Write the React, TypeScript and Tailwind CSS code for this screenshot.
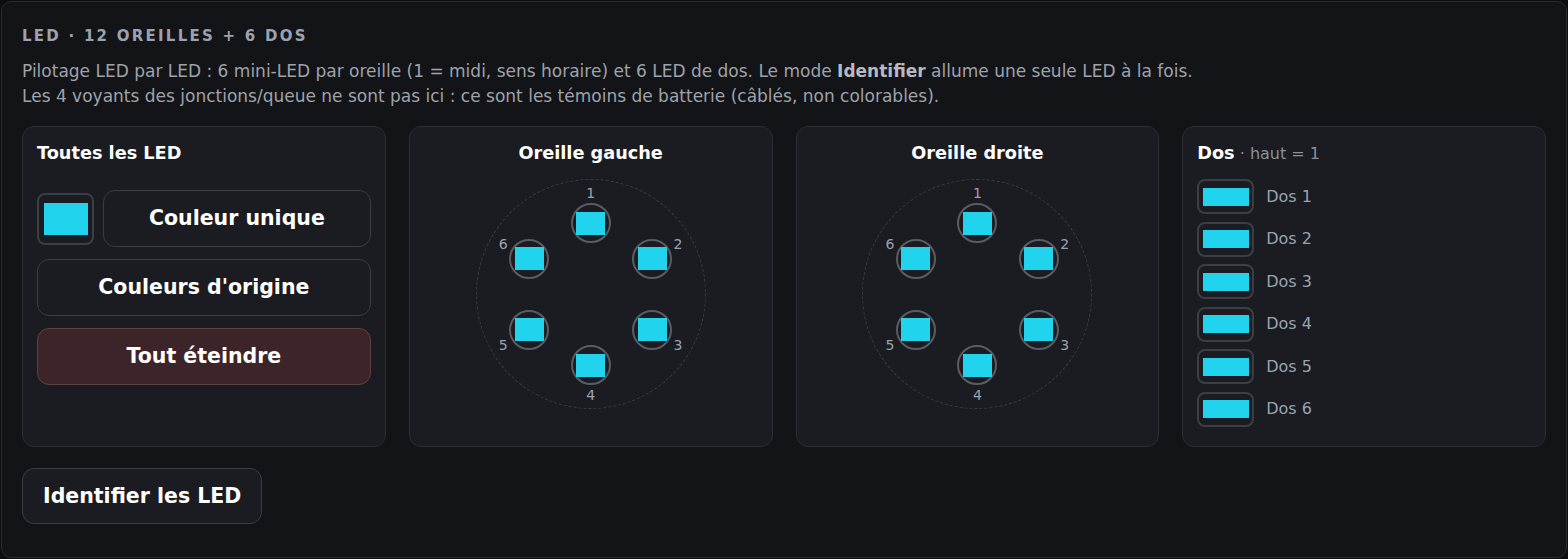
import React from 'react';

const LED_COLOR = '#22d3ee';
const FONT = { fontFamily: '"DejaVu Sans", "Liberation Sans", sans-serif' };

// Ring layout: LED 1 at the top, numbered clockwise
const RING_SIZE = 230;
const LED_RADIUS = 71;
const LABEL_RADIUS = 101;

function polar(index: number, radius: number) {
  const angle = (index * Math.PI) / 3;
  return {
    left: RING_SIZE / 2 + Math.sin(angle) * radius,
    top: RING_SIZE / 2 - Math.cos(angle) * radius,
  };
}

function Card({ children, className = '' }: { children: React.ReactNode; className?: string }) {
  return (
    <div className={`rounded-xl border border-[#2b2e34] bg-[#1a1c21] p-[14px] ${className}`}>
      {children}
    </div>
  );
}

function EarRing({ title }: { title: string }) {
  const leds = [0, 1, 2, 3, 4, 5];
  return (
    <Card className="flex flex-col items-center">
      <h3 className="text-[17.7px] font-bold leading-6 text-white">{title}</h3>
      <div className="relative mt-[14px]" style={{ width: RING_SIZE, height: RING_SIZE }}>
        <div className="absolute inset-0 rounded-full border border-dashed border-[#3a3e46]" />
        {leds.map((i) => {
          const p = polar(i, LED_RADIUS);
          const l = polar(i, LABEL_RADIUS);
          return (
            <React.Fragment key={i}>
              <button
                className="absolute flex h-10 w-10 -translate-x-1/2 -translate-y-1/2 items-center justify-center rounded-full border-2 border-[#595c63] bg-[#1a1c21]"
                style={{ left: p.left, top: p.top }}
              >
                <span className="h-[23px] w-[29px] bg-[#22d3ee]" />
              </button>
              <span
                className="absolute -translate-x-1/2 -translate-y-1/2 text-[14px] leading-none text-[#9ca3af]"
                style={{ left: l.left, top: l.top }}
              >
                {i + 1}
              </span>
            </React.Fragment>
          );
        })}
      </div>
    </Card>
  );
}

function BigButton({ children, className = '' }: { children: React.ReactNode; className?: string }) {
  return (
    <button
      className={`flex h-[57px] items-center justify-center rounded-xl border text-[20.5px] font-bold text-white ${className}`}
    >
      {children}
    </button>
  );
}

export default function App() {
  const backLeds = [1, 2, 3, 4, 5, 6];

  return (
    <div className="min-h-[559px] bg-[#0d0e11] p-px" style={FONT}>
      <div className="h-[557px] rounded-[10px] border border-[#2a2c31] bg-[#131418] px-[20px] pt-[24px]">
        <h2 className="text-[15px] font-bold uppercase leading-5 tracking-[0.15em] text-[#9ca3af]">
          LED · 12 oreilles + 6 dos
        </h2>
        <p className="mt-[13px] text-[17px] leading-[25px] text-[#9fa3aa]">
          Pilotage LED par LED : 6 mini-LED par oreille (1 = midi, sens horaire) et 6 LED de dos. Le mode{' '}
          <b className="text-[#b6bac1]">Identifier</b> allume une seule LED à la fois.
          <br />
          Les 4 voyants des jonctions/queue ne sont pas ici : ce sont les témoins de batterie (câblés, non colorables).
        </p>

        <div className="mt-[17px] grid h-[321px] grid-cols-4 gap-[23px]">
          <Card>
            <h3 className="text-[17.7px] font-bold leading-6 text-white">Toutes les LED</h3>
            <div className="mt-[25px] flex flex-col gap-3">
              <div className="flex items-center gap-[9px]">
                <button className="flex h-[52px] w-[57px] shrink-0 items-center justify-center rounded-lg border-2 border-[#3b3e45] bg-[#1a1c21]">
                  <span className="h-8 w-11" style={{ backgroundColor: LED_COLOR }} />
                </button>
                <BigButton className="flex-1 border-[#3a3d44] bg-[#1a1c21]">Couleur unique</BigButton>
              </div>
              <BigButton className="border-[#3a3d44] bg-[#1a1c21]">Couleurs d'origine</BigButton>
              <BigButton className="border-[#5c4247] bg-[#3d2428]">Tout éteindre</BigButton>
            </div>
          </Card>

          <EarRing title="Oreille gauche" />
          <EarRing title="Oreille droite" />

          <Card>
            <h3 className="leading-6">
              <span className="text-[17.7px] font-bold text-white">Dos</span>
              <span className="text-[16px] text-[#8b9099]"> · haut = 1</span>
            </h3>
            <ul className="mt-[13px] flex flex-col gap-[7.5px]">
              {backLeds.map((n) => (
                <li key={n} className="flex items-center gap-3">
                  <button className="flex h-[35px] w-[57px] items-center justify-center rounded-lg border-2 border-[#3b3e45] bg-[#1a1c21]">
                    <span className="h-[18px] w-[46px]" style={{ backgroundColor: LED_COLOR }} />
                  </button>
                  <span className="text-[16px] text-[#9ca3af]">Dos {n}</span>
                </li>
              ))}
            </ul>
          </Card>
        </div>

        <button className="mt-[21px] flex h-[56px] items-center rounded-xl border border-[#3a3d44] bg-[#1a1c21] px-[20px] text-[20.5px] font-bold text-white">
          Identifier les LED
        </button>
      </div>
    </div>
  );
}
